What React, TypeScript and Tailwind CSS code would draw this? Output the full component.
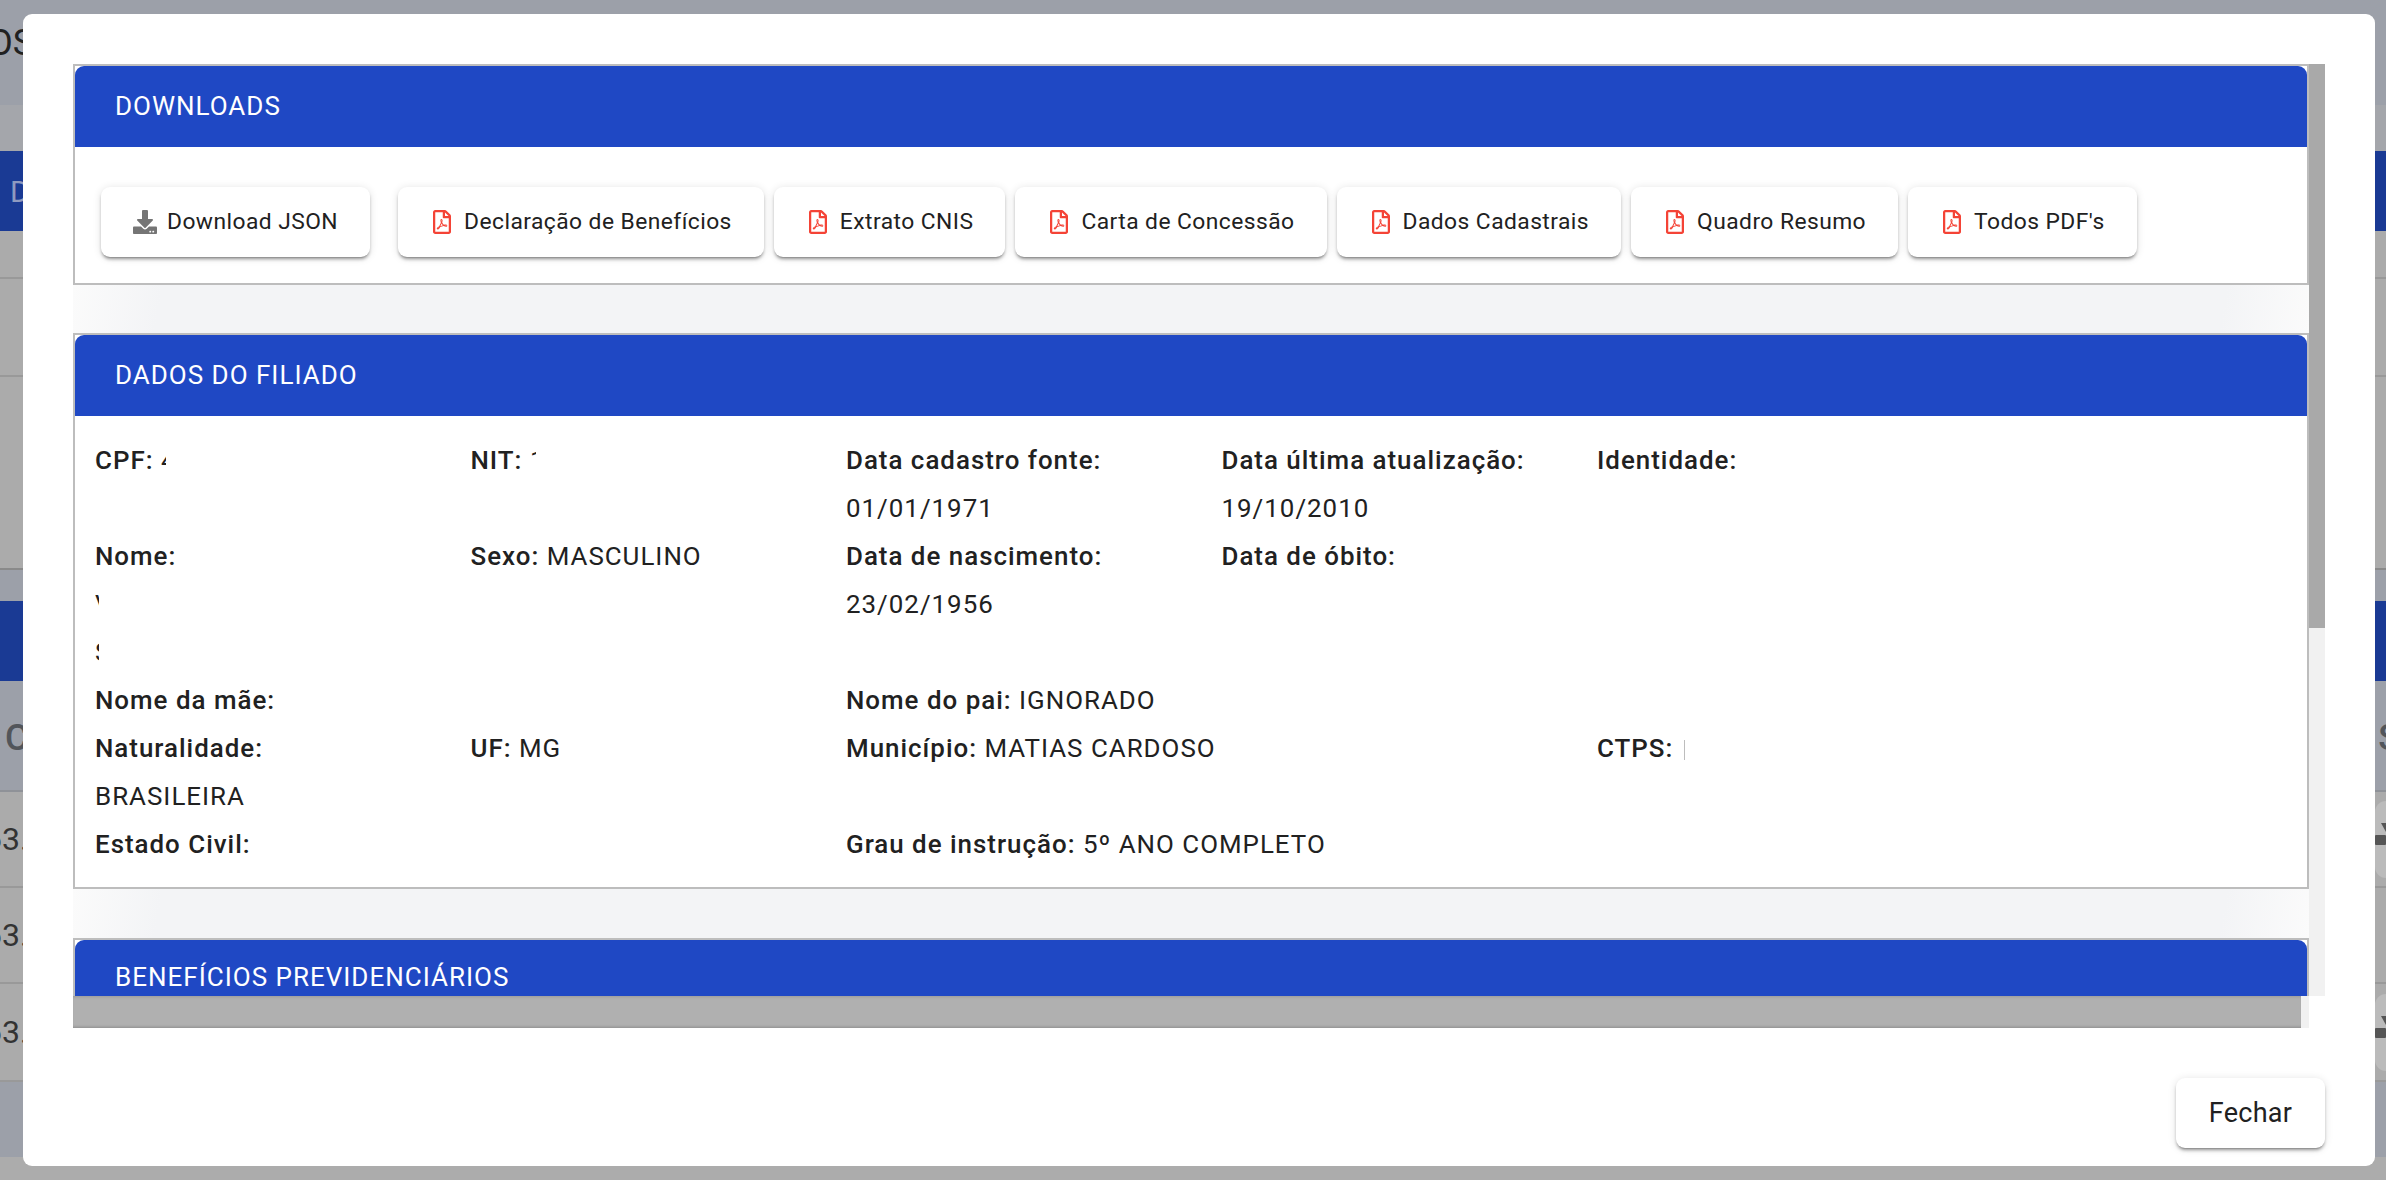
import type { ReactNode } from 'react';
import { FaDownload, FaRegFilePdf } from 'react-icons/fa';

const pdfButtons = [
  'Declaração de Benefícios',
  'Extrato CNIS',
  'Carta de Concessão',
  'Dados Cadastrais',
  'Quadro Resumo',
  "Todos PDF's",
];

function Label({ children }: { children: ReactNode }) {
  return <span className="font-medium">{children}</span>;
}

// masked values in the screenshot only leave a sliver of the first character
function Masked({ char, className }: { char: string; className: string }) {
  return <span className={`inline-block overflow-hidden align-top ${className}`}>{char}</span>;
}

function Button({ icon, children }: { icon: ReactNode; children: ReactNode }) {
  return (
    <button className="flex h-[70px] items-center gap-[10px] rounded-[9px] bg-white px-[32px] text-[22.8px] tracking-[0.45px] text-[#212121] shadow-[0_3px_2px_-2px_rgba(0,0,0,0.3),0_3px_3px_0_rgba(0,0,0,0.2),0_1px_8px_0_rgba(0,0,0,0.12)]">
      {icon}
      <span className="whitespace-nowrap">{children}</span>
    </button>
  );
}

function CardHeader({ title, clipped }: { title: string; clipped?: boolean }) {
  return (
    <div
      className={`flex items-center rounded-t-[9px] bg-[#1f48c4] pl-[40px] text-[26px] tracking-[1px] text-white ${
        clipped ? 'h-[56px] pt-[18px]' : 'h-[81px]'
      }`}
    >
      {title}
    </div>
  );
}

function Gap({ className }: { className: string }) {
  return (
    <div
      className={`bg-[linear-gradient(100deg,#fbfbfb_0%,#f3f4f6_4%,#f3f4f6_96%,#fbfbfb_100%)] ${className}`}
    />
  );
}

function Background() {
  return (
    <div className="flex h-[1180px] flex-col text-[#212121]">
      <div className="flex h-[105px] items-start bg-[#9ca0a9] pt-[16px]">
        <span className="ml-[-12px] text-[36px]">OS</span>
      </div>
      <div className="h-[46px] bg-[#a4a6ab]" />
      <div className="flex h-[80px] items-center bg-[#1a3a94] pl-[10px] text-[30px] text-[#8f9ac0]">D</div>
      <div className="h-[48px] border-b-2 border-[#999999] bg-[#ababab]" />
      <div className="h-[98px] border-b-2 border-[#999999] bg-[#ababab]" />
      <div className="h-[193px] border-b-2 border-[#8a8a8a] bg-[#ababab]" />
      <div className="h-[31px] bg-[#9ca0a9]" />
      <div className="h-[80px] bg-[#1a3a94]" />
      <div className="flex h-[111px] items-center justify-between border-b-2 border-[#8f9298] bg-[#9ca0a9] pt-[4px] text-[36px] font-medium text-[#52555a]">
        <span className="ml-[5px]">C</span>
        <span className="mr-[-14px]">S</span>
      </div>
      {[96, 96, 98].map((h, i) => (
        <div
          key={i}
          style={{ height: h }}
          className="flex items-center justify-between border-b-2 border-[#999999] bg-[#ababab] text-[32px] text-[#333333]"
        >
          <span className="ml-[-16px]">63.</span>
          {i !== 1 && (
            <div className="flex h-[77px] w-[11px] items-center justify-end rounded-l-[11px] bg-[#bbbbbb]">
              <svg width="11" height="32" viewBox="0 0 11 32" className="fill-[#555555]">
                <path d="M6 0 L11 0 L11 9 Z" />
                <rect x="0" y="12" width="11" height="10" rx="1" />
              </svg>
            </div>
          )}
        </div>
      ))}
      <div className="h-[75px] bg-[#9ca0a9]" />
      <div className="flex-1 bg-[#acacac]" />
    </div>
  );
}

export default function App() {
  return (
    <div className="relative h-[1180px] w-[2386px] overflow-hidden font-['Roboto',sans-serif]">
      <Background />

      <div className="absolute top-[14px] left-[23px] flex h-[1152px] w-[2352px] flex-col rounded-[9px] bg-white pt-[50px] pr-[50px] pl-[50px]">
        <div className="flex h-[932px] w-[2252px]">
          <div className="w-[2236px] overflow-hidden">
            {/* Downloads */}
            <section className="border-2 border-[#bdbdbd] bg-white">
              <CardHeader title="DOWNLOADS" />
              <div className="flex pt-[40px] pb-[26px] pl-[26px]">
                <div className="mr-[28px]">
                  <Button icon={<FaDownload size={24} className="text-[#757575]" />}>Download JSON</Button>
                </div>
                <div className="flex gap-[10px]">
                  {pdfButtons.map(label => (
                    <Button key={label} icon={<FaRegFilePdf size={24} className="text-[#f44336]" />}>
                      {label}
                    </Button>
                  ))}
                </div>
              </div>
            </section>

            <Gap className="h-[48px]" />

            {/* Dados do filiado */}
            <section className="border-2 border-[#bdbdbd] bg-white">
              <CardHeader title="DADOS DO FILIADO" />
              <div className="pt-[20px] pb-[19px] pl-[20px] text-[25.9px] leading-[48px] tracking-[1px] text-[#212121]">
                <div className="grid grid-cols-[repeat(5,375.5px)]">
                  <div>
                    <Label>CPF:</Label> <Masked char="4" className="w-[5px]" />
                  </div>
                  <div>
                    <Label>NIT:</Label> <Masked char="1" className="w-[6px]" />
                  </div>
                  <div>
                    <Label>Data cadastro fonte:</Label>
                    <div>01/01/1971</div>
                  </div>
                  <div>
                    <Label>Data última atualização:</Label>
                    <div>19/10/2010</div>
                  </div>
                  <div>
                    <Label>Identidade:</Label>
                  </div>
                </div>
                <div className="grid grid-cols-[repeat(5,375.5px)]">
                  <div>
                    <Label>Nome:</Label>
                    <div>
                      <Masked char="V" className="w-[4px]" />
                    </div>
                    <div>
                      <Masked char="S" className="w-[4px]" />
                    </div>
                  </div>
                  <div>
                    <Label>Sexo:</Label> MASCULINO
                  </div>
                  <div>
                    <Label>Data de nascimento:</Label>
                    <div>23/02/1956</div>
                  </div>
                  <div>
                    <Label>Data de óbito:</Label>
                  </div>
                </div>
                <div className="grid grid-cols-[repeat(5,375.5px)]">
                  <div className="col-span-2">
                    <Label>Nome da mãe:</Label>
                  </div>
                  <div className="col-span-3">
                    <Label>Nome do pai:</Label> IGNORADO
                  </div>
                </div>
                <div className="grid grid-cols-[repeat(5,375.5px)]">
                  <div>
                    <Label>Naturalidade:</Label>
                    <div>BRASILEIRA</div>
                  </div>
                  <div>
                    <Label>UF:</Label> MG
                  </div>
                  <div className="col-span-2">
                    <Label>Município:</Label> MATIAS CARDOSO
                  </div>
                  <div>
                    <Label>CTPS:</Label>{' '}
                    <span className="ml-[3px] inline-block h-[20px] w-px bg-[#bdbdbd] align-middle" />
                  </div>
                </div>
                <div className="grid grid-cols-[repeat(5,375.5px)]">
                  <div className="col-span-2">
                    <Label>Estado Civil:</Label>
                  </div>
                  <div className="col-span-3">
                    <Label>Grau de instrução:</Label> 5º ANO COMPLETO
                  </div>
                </div>
              </div>
            </section>

            <Gap className="h-[49px]" />

            {/* Benefícios, cut off by the scroll area */}
            <section className="border-x-2 border-t-2 border-[#bdbdbd] bg-white">
              <CardHeader title="BENEFÍCIOS PREVIDENCIÁRIOS" clipped />
            </section>
          </div>

          {/* scrollbar */}
          <div className="flex w-[16px] flex-col bg-[#f1f1f1]">
            <div className="h-[564px] bg-[#a9a9a9]" />
          </div>
        </div>

        {/* horizontal scrollbar */}
        <div className="flex h-[32px] w-[2236px]">
          <div className="w-[2228px] bg-[#b0b0b0] shadow-[inset_0_-3px_3px_-2px_rgba(0,0,0,0.2),inset_0_3px_3px_-2px_rgba(0,0,0,0.12)]" />
          <div className="w-[8px] bg-[#f1f1f1]" />
        </div>

        <div className="mt-[50px] flex justify-end">
          <button className="flex h-[70px] w-[149px] items-center justify-center rounded-[9px] bg-white text-[27px] tracking-[0.3px] text-[#212121] shadow-[0_3px_2px_-2px_rgba(0,0,0,0.3),0_3px_3px_0_rgba(0,0,0,0.2),0_1px_8px_0_rgba(0,0,0,0.12)]">
            Fechar
          </button>
        </div>
      </div>
    </div>
  );
}
